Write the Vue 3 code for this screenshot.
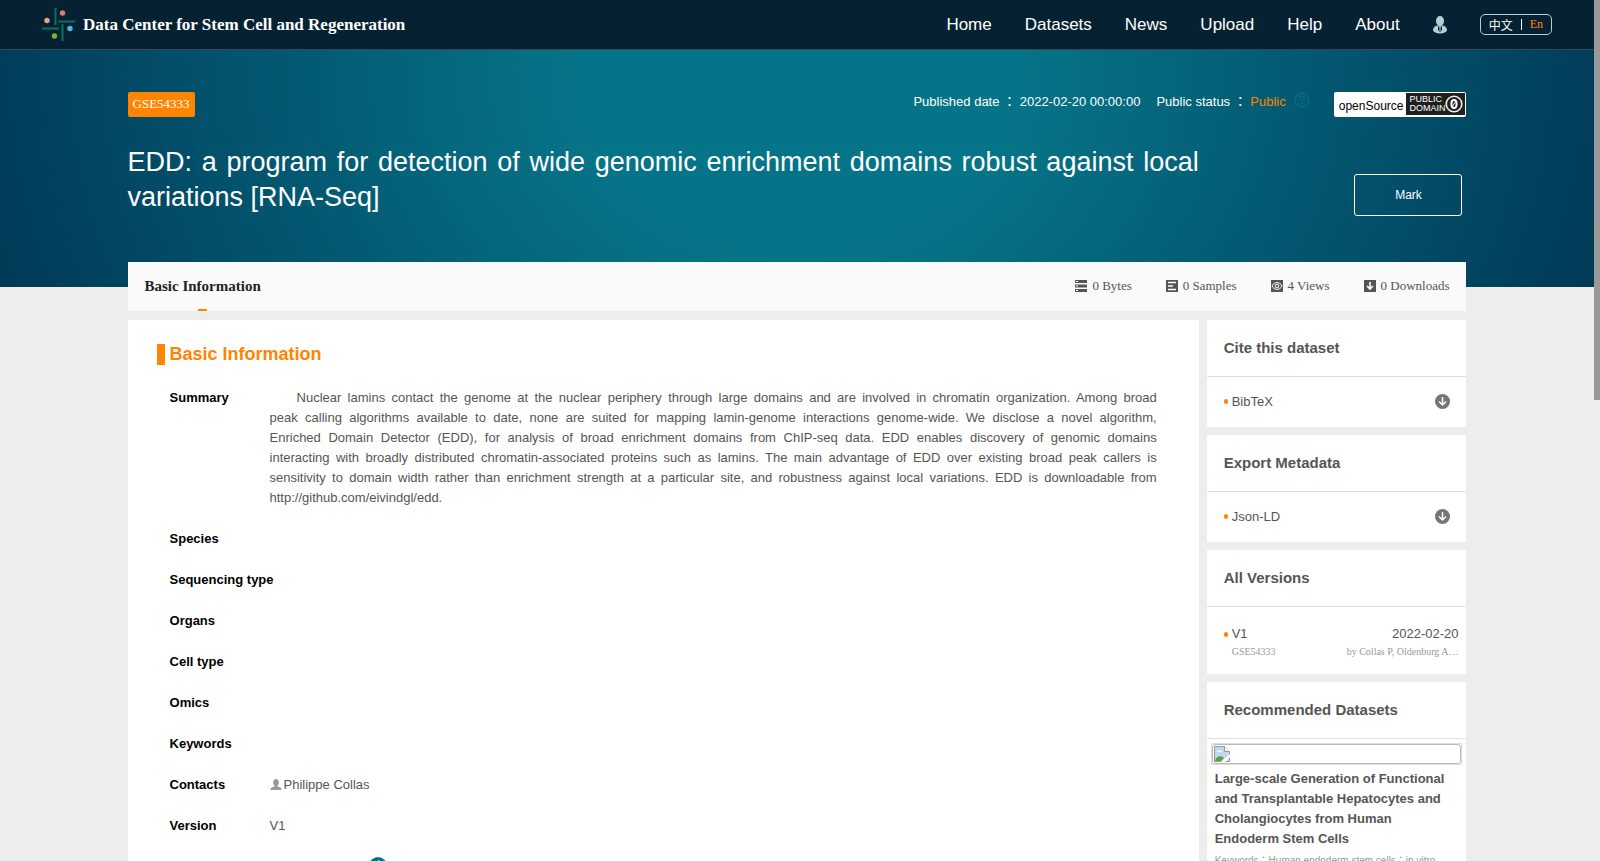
<script setup>
import { ref } from "vue";

const navLinks = ["Home", "Datasets", "News", "Upload", "Help", "About"];

const stats = [
  { icon: "bytes", text: "0 Bytes" },
  { icon: "samples", text: "0 Samples" },
  { icon: "views", text: "4 Views" },
  { icon: "downloads", text: "0 Downloads" }
];

const summaryLines = [
  "Nuclear lamins contact the genome at the nuclear periphery through large domains and are involved in chromatin organization. Among broad",
  "peak calling algorithms available to date, none are suited for mapping lamin-genome interactions genome-wide. We disclose a novel algorithm,",
  "Enriched Domain Detector (EDD), for analysis of broad enrichment domains from ChIP-seq data. EDD enables discovery of genomic domains",
  "interacting with broadly distributed chromatin-associated proteins such as lamins. The main advantage of EDD over existing broad peak callers is",
  "sensitivity to domain width rather than enrichment strength at a particular site, and robustness against local variations. EDD is downloadable from",
  "http://github.com/eivindgl/edd."
];

const emptyFields = ["Species", "Sequencing type", "Organs", "Cell type", "Omics", "Keywords"];

const exportCards = [
  { title: "Cite this dataset", format: "BibTeX" },
  { title: "Export Metadata", format: "Json-LD" }
];

const marked = ref(false);
</script>

<template>
  <div class="page">
    <div class="page-body">
      <header class="top-bar">
        <a class="brand" href="#">
          <svg class="brand-logo" viewBox="0 0 34 34" aria-hidden="true">
            <g fill="none" stroke="#08735c" stroke-width="2">
              <path d="M13.5 0v17M20.5 16v17M0 20.5h17M16 13.5h17" />
            </g>
            <circle cx="20.500" cy="5" r="2.700" fill="#e07a78" />
            <circle cx="5" cy="12.500" r="2.700" fill="#dfa888" />
            <circle cx="28" cy="20.500" r="2.700" fill="#46bcd8" />
            <circle cx="12.500" cy="28" r="2.700" fill="#6cb92f" />
          </svg>
          <span>Data Center for Stem Cell and Regeneration</span>
        </a>

        <nav class="nav">
          <a v-for="link in navLinks" :key="link" href="#">{{ link }}</a>
          <a class="user-link" href="#" aria-label="Account">
            <svg viewBox="0 0 14 18">
              <ellipse cx="7" cy="5" rx="4" ry="5" fill="#b5d0d6" />
              <path d="M4 9.500C1 10.500 0 12 0 14.500C2 18.500 12 18.500 14 14.500C14 12 13 10.500 10 9.500Z" fill="#b5d0d6" />
              <path d="M5 10l2 1.500 2-1.500v4l-2 2-2-2z" fill="#062232" />
              <path d="M7 11v4" stroke="#b5d0d6" />
            </svg>
          </a>
          <div class="lang">
            <a href="#">中文</a>
            <span class="lang-divider"></span>
            <a class="active" href="#">En</a>
          </div>
        </nav>
      </header>

      <section class="hero">
        <div class="hero-meta">
          <span class="accession">GSE54333</span>
          <div class="meta-right">
            <span>Published date ： 2022-02-20 00:00:00</span>
            <span class="status">Public status ： <em>Public</em></span>
            <svg class="help" viewBox="0 0 16 16" aria-hidden="true">
              <circle cx="8" cy="8" r="7" />
              <path d="M5.500 6.500C5.500 3 10.500 3 10.500 6.200C10.500 8 8 8 8 10M8 11v1.500" />
            </svg>
            <span class="license">
              <span class="license-name">openSource</span>
              <span class="license-badge">
                <span class="license-text">PUBLIC<br />DOMAIN</span>
                <svg viewBox="0 0 18 18" aria-hidden="true">
                  <circle cx="9" cy="9" r="7.800" fill="none" stroke="#eee" stroke-width="1.600" />
                  <ellipse cx="9" cy="9" rx="2.600" ry="4" fill="none" stroke="#fff" stroke-width="2" />
                  <path d="M7.500 11.500l3-5" stroke="#fff" />
                </svg>
              </span>
            </span>
          </div>
        </div>
        <div class="hero-main">
          <h1>EDD: a program for detection of wide genomic enrichment domains robust against local variations [RNA-Seq]</h1>
          <button class="mark-btn" type="button" :aria-pressed="marked" @click="marked = !marked">Mark</button>
        </div>
      </section>

      <main class="content">
        <div class="tab-bar">
          <a class="tab" href="#">Basic Information</a>
          <ul class="stats">
            <li v-for="stat in stats" :key="stat.icon">
              <svg viewBox="0 0 12 12" aria-hidden="true">
                <template v-if="stat.icon === 'bytes'">
                  <path d="M0 0h12v3H0zM0 4.500h12v3H0zM0 9h12v3H0z" fill="#555" />
                  <path d="M1 1.500h2M1 6h2M1 10.500h2" stroke="#fff" />
                </template>
                <template v-else-if="stat.icon === 'samples'">
                  <path d="M0 0h12v12H0z" fill="#555" />
                  <path d="M2 2.500h8M2 6h5M2 9.500h8" stroke="#fff" stroke-width="1.500" />
                </template>
                <template v-else-if="stat.icon === 'views'">
                  <path d="M0 0h12v12H0z" fill="#555" />
                  <path d="M1 6C3 1.500 9 1.500 11 6C9 10.500 3 10.500 1 6Z" fill="none" stroke="#fff" />
                  <circle cx="6" cy="6" r="1.800" fill="none" stroke="#fff" />
                </template>
                <template v-else>
                  <path d="M0 0h12v12H0z" fill="#555" />
                  <path d="M6 2v7M3 6l3 3 3-3" fill="none" stroke="#fff" stroke-width="1.600" />
                </template>
              </svg>
              {{ stat.text }}
            </li>
          </ul>
        </div>

        <div class="columns">
          <article class="details">
            <h2>Basic Information</h2>
            <dl>
              <div class="field">
                <dt>Summary</dt>
                <dd class="summary">
                  <span v-for="line in summaryLines" :key="line">{{ line }}</span>
                </dd>
              </div>
              <div v-for="name in emptyFields" :key="name" class="field">
                <dt>{{ name }}</dt>
                <dd></dd>
              </div>
              <div class="field">
                <dt>Contacts</dt>
                <dd class="contact">
                  <svg viewBox="0 0 12 12" aria-hidden="true">
                    <ellipse cx="6" cy="3.500" rx="2.800" ry="3.500" fill="#999" />
                    <path d="M4.500 5h3v2.500C10 8 11.500 8.500 11.500 11H.5C.5 8.500 2 8 4.500 7.500z" fill="#999" />
                  </svg>
                  Philippe Collas
                </dd>
              </div>
              <div class="field">
                <dt>Version</dt>
                <dd>V1</dd>
              </div>
            </dl>
            <div class="version-track">
              <svg viewBox="0 0 18 18" aria-hidden="true">
                <circle cx="9" cy="9" r="9" fill="#067287" />
                <path d="M7 5.500l3-2v11" fill="none" stroke="#fff" />
              </svg>
            </div>
          </article>

          <aside class="sidebar">
            <section v-for="card in exportCards" :key="card.title" class="card">
              <h3>{{ card.title }}</h3>
              <div class="export-row">
                <span class="bullet">{{ card.format }}</span>
                <a href="#" :aria-label="'Download ' + card.format">
                  <svg viewBox="0 0 15 15">
                    <circle cx="7.500" cy="7.500" r="7.500" fill="#757575" />
                    <path d="M7.500 3v8M4 7.500l3.500 3.500L11 7.500" fill="none" stroke="#fff" stroke-width="1.500" />
                  </svg>
                </a>
              </div>
            </section>

            <section class="card">
              <h3>All Versions</h3>
              <div class="version-row">
                <div class="version-line">
                  <span class="bullet">V1</span>
                  <span>2022-02-20</span>
                </div>
                <div class="version-sub">
                  <span>GSE54333</span>
                  <span>by Collas P, Oldenburg A…</span>
                </div>
              </div>
            </section>

            <section class="card">
              <h3>Recommended Datasets</h3>
              <div class="recommended">
                <div class="thumb">
                  <div class="thumb-inner">
                    <svg viewBox="0 0 16 16" aria-hidden="true">
                      <path d="M.5.5h10l5 5v10H.5z" fill="#c3d6f6" stroke="#999" />
                      <path d="M10.500.5v5h5" fill="#fff" stroke="#999" />
                      <path d="M3 6c0-2 2-2 2.500-1C7 4 8 5 8 6z" fill="#fff" />
                      <path d="M1 15c1-5 6-6 9-3l-3 3z" fill="#56a636" />
                      <path d="M7 16l9-8v3l-5 5z" fill="#fff" />
                    </svg>
                  </div>
                </div>
                <a class="rec-title" href="#">Large-scale Generation of Functional and Transplantable Hepatocytes and Cholangiocytes from Human Endoderm Stem Cells</a>
                <p class="rec-keywords">Keywords：Human endoderm stem cells；in vitro</p>
              </div>
            </section>
          </aside>
        </div>
      </main>
    </div>
    <div class="scroll-track">
      <div class="scroll-thumb"></div>
    </div>
  </div>
</template>

<style>
body {
  margin: 0;
  background: #ededed;
}
</style>

<style scoped>
.page {
  display: flex;
  height: 100vh;
  overflow: hidden;
  font-family: "Liberation Sans", "Noto Sans CJK TC", sans-serif;
  font-size: 13px;
  color: #555;
  background: #ededed;
}

.page * {
  box-sizing: border-box;
}

.page a {
  color: inherit;
  text-decoration: none;
}

.page-body {
  flex: 1;
  min-width: 0;
}

.scroll-track {
  width: 6px;
  background: #ededed;
}

.scroll-thumb {
  height: 400px;
  background: #999;
}

/* Top bar */
.top-bar {
  display: flex;
  justify-content: space-between;
  align-items: center;
  height: 50px;
  padding: 0 42px;
  background: #062232;
  border-bottom: 1px solid #33485a;
  color: #fff;
}

.brand {
  display: flex;
  align-items: center;
  gap: 7px;
  font: bold 17px "Liberation Serif", serif;
}

.brand-logo {
  width: 34px;
  height: 34px;
}

.nav {
  display: flex;
  align-items: center;
  gap: 33px;
  font-size: 17px;
}

.user-link svg {
  display: block;
  width: 14px;
  height: 18px;
}

.lang {
  display: flex;
  align-items: center;
  gap: 8px;
  height: 21px;
  padding: 0 8px;
  border: 1px solid #b5d0d6;
  border-radius: 5px;
  font: 12px "Liberation Serif", "Noto Sans CJK SC", serif;
}

.lang-divider {
  width: 1px;
  height: 11px;
  background: #fff;
}

.page .lang .active {
  color: #ff8400;
}

/* Hero */
.hero {
  height: 237px;
  padding: 42px 8% 0;
  background: radial-gradient(ellipse 55% 300% at 50% 10%, #067488 0%, #067488 25%, #003654 100%);
  color: #fff;
}

.hero-meta {
  display: flex;
  justify-content: space-between;
  align-items: flex-start;
}

.accession {
  padding: 0 5px 2px;
  background: #ff8400;
  border-radius: 2px;
  font: 13px/23px "Liberation Serif", serif;
}

.meta-right {
  display: flex;
  align-items: flex-start;
  line-height: 20px;
}

.status {
  margin-left: 16px;
}

.status em {
  font-style: normal;
  color: #ff8400;
}

.help {
  width: 16px;
  height: 16px;
  margin: 0 24px 0 8px;
  fill: none;
  stroke: #067b8c;
}

.license {
  display: flex;
  height: 25px;
  padding: 1px 1px 2px 5px;
  background: #fff;
  border-radius: 2px;
  font-size: 12px;
  color: #000;
}

.license-name {
  padding-top: 3px;
}

.license-badge {
  display: flex;
  align-items: center;
  margin-left: 3px;
  padding: 0 2px 0 3px;
  background: #1f1f1f;
  color: #fff;
}

.license-text {
  font-size: 9px;
  line-height: 9px;
}

.license-badge svg {
  width: 18px;
  height: 18px;
}

.hero-main {
  display: flex;
  justify-content: space-between;
  align-items: flex-start;
  padding-top: 28px;
}

h1 {
  width: 80%;
  margin: 0;
  font-size: 27px;
  font-weight: 400;
  line-height: 35px;
  text-align: justify;
}

.mark-btn {
  width: 108px;
  height: 42px;
  margin: 29px 4px 0 0;
  border: 1px solid #fff;
  border-radius: 3px;
  background: transparent;
  color: #fff;
  font: 12px "Liberation Sans", sans-serif;
}

/* Content */
.content {
  position: relative;
  margin: -25px 8% 0;
}

.tab-bar {
  display: flex;
  justify-content: space-between;
  height: 49px;
  padding: 0 17px;
  background: #fafafa;
  font-family: "Liberation Serif", serif;
}

.tab {
  display: flex;
  flex-direction: column;
  align-items: center;
  font-size: 15px;
  font-weight: 700;
  line-height: 49px;
}

.page .tab {
  color: #222;
}

.tab::after {
  content: "";
  width: 9px;
  height: 2px;
  margin-top: -2px;
  background: #ff8400;
}

.stats {
  display: flex;
  gap: 34px;
  margin: 0;
  padding: 0;
  list-style: none;
  line-height: 47px;
}

.stats li {
  display: flex;
  align-items: center;
  gap: 5px;
  height: 47px;
}

.stats svg {
  width: 12px;
  height: 12px;
}

.columns {
  display: flex;
  align-items: flex-start;
  gap: 8px;
  margin-top: 9px;
}

.details {
  width: 80%;
  padding: 24px 42px 24px;
  background: #fff;
}

h2 {
  margin: 0 0 23px -13px;
  padding-left: 5px;
  border-left: 8px solid #ff8400;
  font-size: 18px;
  line-height: 21px;
  color: #ff8400;
}

dl {
  margin: 0;
}

.field {
  display: flex;
  margin-bottom: 21px;
  line-height: 20px;
}

dt {
  width: 100px;
  flex-shrink: 0;
  font-weight: 700;
  white-space: nowrap;
  color: #000;
}

dd {
  flex: 1;
  margin: 0;
}

.summary span {
  display: block;
  text-align: justify;
  text-align-last: justify;
}

.summary span:first-child {
  text-indent: 27px;
}

.summary span:last-child {
  text-align-last: left;
}

.contact {
  display: flex;
  align-items: center;
  gap: 2px;
}

.contact svg {
  width: 12px;
  height: 12px;
}

.version-track {
  padding-left: 199px;
}

.version-track svg {
  width: 18px;
  height: 18px;
}

/* Sidebar */
.sidebar {
  flex: 1;
  min-width: 0;
}

.card {
  margin-bottom: 8px;
  background: #fff;
}

h3 {
  margin: 0;
  padding: 0 17px;
  border-bottom: 1px solid #e0e0e0;
  font-size: 15px;
  line-height: 56px;
}

.export-row {
  display: flex;
  justify-content: space-between;
  align-items: center;
  height: 50px;
  padding: 0 16px 2px 17px;
}

.export-row svg {
  display: block;
  width: 15px;
  height: 15px;
}

.bullet {
  display: flex;
  align-items: center;
  gap: 4px;
}

.bullet::before {
  content: "";
  width: 4px;
  height: 5px;
  border-radius: 2px;
  background: #ff8400;
}

.version-row {
  padding: 17px 8px 14px 17px;
}

.version-line {
  display: flex;
  justify-content: space-between;
  line-height: 20px;
}

.version-sub {
  display: flex;
  justify-content: space-between;
  padding-left: 8px;
  font: 10px/16px "Liberation Serif", serif;
  color: #999;
}

.recommended {
  padding: 4px 4px 0;
}

.thumb {
  border: 1px solid #ddd;
}

.thumb-inner {
  padding: 1px;
  border: 1px solid #bbb;
  border-radius: 3px;
}

.thumb svg {
  display: block;
  width: 16px;
  height: 16px;
}

.rec-title {
  display: block;
  padding: 4px 4px 0;
  font-weight: 700;
  line-height: 20px;
}

.rec-keywords {
  margin: 4px 4px 0;
  font-size: 10px;
  line-height: 16px;
  color: #999;
}
</style>
